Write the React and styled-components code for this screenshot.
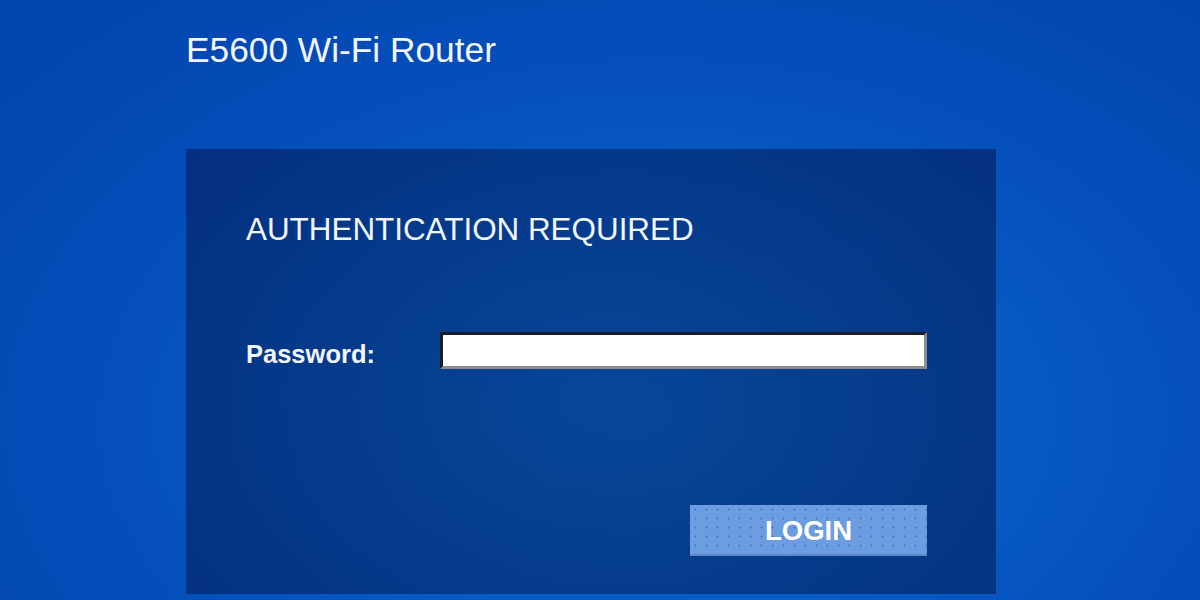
import styled, { createGlobalStyle } from "styled-components"

const GlobalStyle = createGlobalStyle`
html, body {
margin: 0;
padding: 0;
}
body {
font-family: "Liberation Sans", Arial, sans-serif;
}
`

const Page = styled.div`
width: 1200px;
height: 600px;
overflow: hidden;
box-sizing: border-box;
padding-left: 186px;
background: radial-gradient(ellipse 70% 90% at 55% 70%, #0b6ad2 0%, #085fc8 30%, #054fbb 65%, #0345ae 100%);
color: #f2f6ff;
`

const Heading = styled.h1`
margin: 0;
padding-top: 30px;
font-size: 35.3px;
line-height: 40px;
font-weight: normal;
`

const Card = styled.div`
margin-top: 79px;
width: 810px;
height: 445px;
box-sizing: border-box;
padding: 63px 69px 0 60px;
display: flex;
flex-direction: column;
background: radial-gradient(ellipse 60% 80% at 50% 55%, rgba(6, 50, 120, 0.62), rgba(3, 38, 105, 0.72));
`

const Title = styled.h2`
margin: 0;
font-size: 31.4px;
line-height: 36px;
font-weight: normal;
`

const Row = styled.div`
margin-top: 84px;
display: flex;
align-items: center;
`

const Label = styled.label`
width: 194px;
font-size: 25.5px;
font-weight: bold;
padding-top: 7px;
`

const Input = styled.input`
flex: 1;
height: 37px;
box-sizing: border-box;
border: 3px solid;
border-color: #1b1d2a #8c8c8c #8c8c8c #1b1d2a;
background: #fff;
outline: none;
`

const Actions = styled.div`
margin-top: 136px;
display: flex;
justify-content: flex-end;
`

const LoginButton = styled.button`
width: 237px;
height: 51px;
padding-top: 3px;
border: none;
border-bottom: 2px solid #5a87c8;
color: #fff;
font-family: "Liberation Sans", Arial, sans-serif;
font-size: 27.5px;
font-weight: bold;
background-color: #6c9de0;
background-image: radial-gradient(circle, rgba(40, 80, 160, 0.5) 0.8px, transparent 1.3px);
background-size: 11px 9px;
cursor: pointer;
`

const App = () => {
    return (
        <>
            <GlobalStyle />
            <Page>
                <Heading>E5600 Wi-Fi Router</Heading>
                <Card>
                    <Title>AUTHENTICATION REQUIRED</Title>
                    <Row>
                        <Label htmlFor="pw">Password:</Label>
                        <Input id="pw" type="password" />
                    </Row>
                    <Actions>
                        <LoginButton>LOGIN</LoginButton>
                    </Actions>
                </Card>
            </Page>
        </>
    )
}

export default App
